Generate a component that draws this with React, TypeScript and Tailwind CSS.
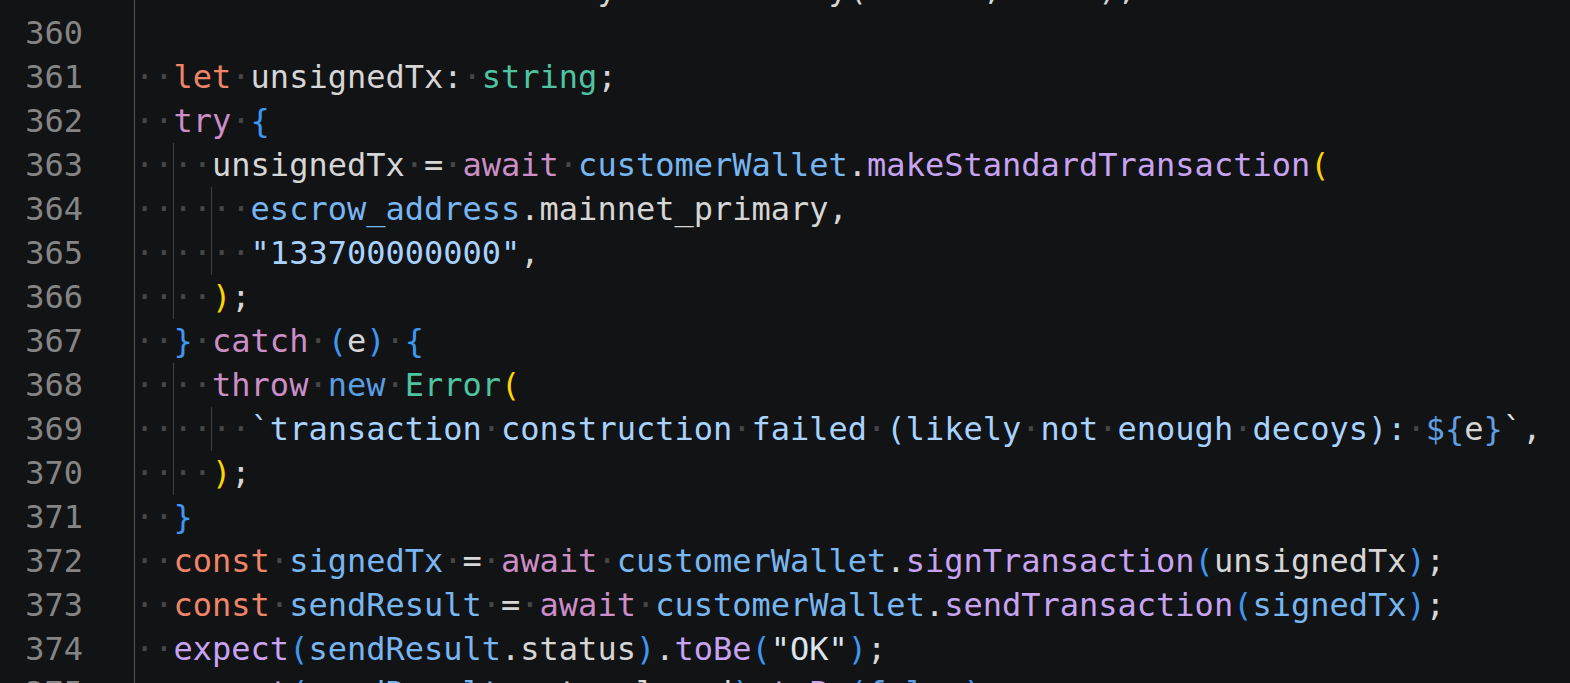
type Tok = [string, string];

const P = "text-[#d6d6d6]";
const KW = "text-[#ee8468]";
const CTRL = "text-[#cc8ec7]";
const TYPE = "text-[#4fc3a1]";
const VAR = "text-[#78b6f2]";
const FN = "text-[#c7a3f2]";
const STR = "text-[#a8d2ff]";
const NEW = "text-[#5a9de2]";
const BR = "text-[#3f97f2]";
const YEL = "text-[#ffd500]";
const TPL = "text-[#5f9ee0]";
const OK = "text-[#dde4ec]";

const LINES: { n: number; g: number[]; t: Tok[] }[] = [
  { n: 359, g: [], t: [["  await customerWallet.syncUntilReady(daemon, true);", P]] },
  { n: 360, g: [], t: [] },
  { n: 361, g: [], t: [["  ", P], ["let", KW], [" unsignedTx: ", P], ["string", TYPE], [";", P]] },
  { n: 362, g: [], t: [["  ", P], ["try", CTRL], [" ", P], ["{", BR]] },
  {
    n: 363,
    g: [2],
    t: [
      ["    unsignedTx = ", P],
      ["await", CTRL],
      [" ", P],
      ["customerWallet", VAR],
      [".", P],
      ["makeStandardTransaction", FN],
      ["(", YEL],
    ],
  },
  { n: 364, g: [2, 4], t: [["      ", P], ["escrow_address", VAR], [".mainnet_primary,", P]] },
  { n: 365, g: [2, 4], t: [["      ", P], ['"133700000000"', STR], [",", P]] },
  { n: 366, g: [2], t: [["    ", P], [")", YEL], [";", P]] },
  {
    n: 367,
    g: [],
    t: [["  ", P], ["}", BR], [" ", P], ["catch", CTRL], [" ", P], ["(", BR], ["e", P], [")", BR], [" ", P], ["{", BR]],
  },
  { n: 368, g: [2], t: [["    ", P], ["throw", CTRL], [" ", P], ["new", NEW], [" ", P], ["Error", TYPE], ["(", YEL]] },
  {
    n: 369,
    g: [2, 4],
    t: [
      ["      ", P],
      ["`transaction construction failed (likely not enough decoys): ", STR],
      ["${", TPL],
      ["e", P],
      ["}", TPL],
      ["`", OK],
      [",", P],
    ],
  },
  { n: 370, g: [2], t: [["    ", P], [")", YEL], [";", P]] },
  { n: 371, g: [], t: [["  ", P], ["}", BR]] },
  {
    n: 372,
    g: [],
    t: [
      ["  ", P],
      ["const", KW],
      [" ", P],
      ["signedTx", VAR],
      [" = ", P],
      ["await", CTRL],
      [" ", P],
      ["customerWallet", VAR],
      [".", P],
      ["signTransaction", FN],
      ["(", BR],
      ["unsignedTx", P],
      [")", BR],
      [";", P],
    ],
  },
  {
    n: 373,
    g: [],
    t: [
      ["  ", P],
      ["const", KW],
      [" ", P],
      ["sendResult", VAR],
      [" = ", P],
      ["await", CTRL],
      [" ", P],
      ["customerWallet", VAR],
      [".", P],
      ["sendTransaction", FN],
      ["(", BR],
      ["signedTx", VAR],
      [")", BR],
      [";", P],
    ],
  },
  {
    n: 374,
    g: [],
    t: [
      ["  ", P],
      ["expect", FN],
      ["(", BR],
      ["sendResult", VAR],
      [".status", P],
      [")", BR],
      [".", P],
      ["toBe", FN],
      ["(", BR],
      ['"OK"', OK],
      [")", BR],
      [";", P],
    ],
  },
  {
    n: 375,
    g: [],
    t: [
      ["  ", P],
      ["expect", FN],
      ["(", BR],
      ["sendResult", VAR],
      [".not_relayed", P],
      [")", BR],
      [".", P],
      ["toBe", FN],
      ["(", BR],
      ["false", NEW],
      [")", BR],
      [";", P],
    ],
  },
];

// spaces are shown as faint middle dots, like "render whitespace" in the editor
function Run({ text, cls }: { text: string; cls: string }) {
  const parts = text.split(/( +)/).filter((s) => s.length > 0);
  return (
    <>
      {parts.map((s, i) =>
        s[0] === " " ? (
          <span key={i} className="text-[#474747]">
            {"·".repeat(s.length)}
          </span>
        ) : (
          <span key={i} className={cls}>
            {s}
          </span>
        ),
      )}
    </>
  );
}

export default function App() {
  return (
    <div className="w-[1570px] h-[683px] overflow-hidden bg-[#121314] font-['DejaVu_Sans_Mono','Liberation_Mono',monospace] text-[32px] leading-[44px]">
      <div className="-mt-[33px]">
        {LINES.map((l) => (
          <div key={l.n} className="flex h-[44px]">
            <div className="w-[134px] shrink-0 pr-[51px] text-right text-[#858585]">{l.n}</div>
            <div className="relative flex-1 whitespace-pre border-l border-[#555555]">
              {l.g.map((c) => (
                <span
                  key={c}
                  className={
                    c === 2
                      ? "absolute top-0 bottom-0 left-[38px] w-px bg-[#414141]"
                      : "absolute top-0 bottom-0 left-[76px] w-px bg-[#414141]"
                  }
                />
              ))}
              {l.t.map(([text, cls], i) => (
                <Run key={i} text={text} cls={cls} />
              ))}
            </div>
          </div>
        ))}
      </div>
    </div>
  );
}
